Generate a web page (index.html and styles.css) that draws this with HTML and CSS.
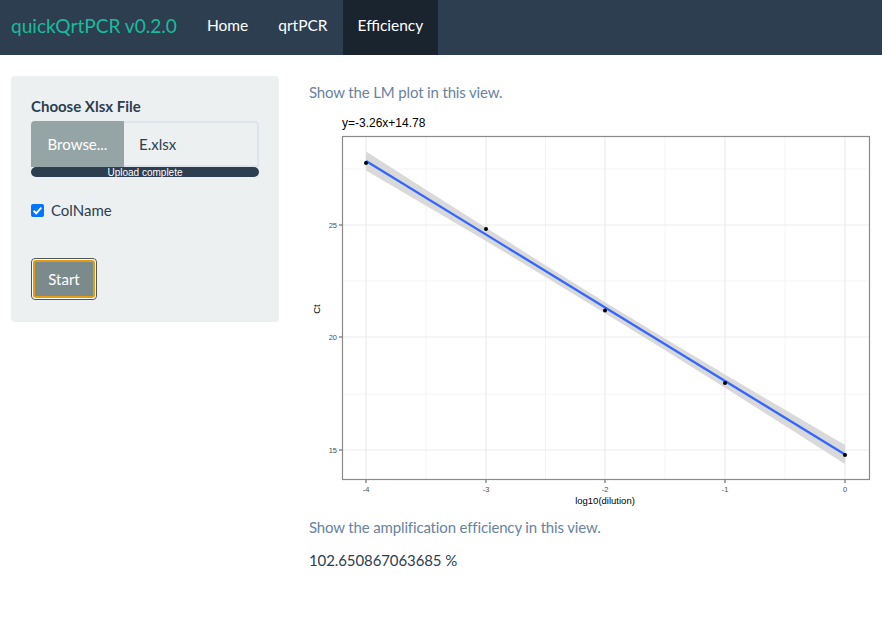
FILE: index.html
```html
<!DOCTYPE html>
<html>
<head>
<meta charset="utf-8">
<title>quickQrtPCR</title>
<link rel="stylesheet" href="styles.css">
</head>
<body>
<nav class="navbar">
  <span class="brand">quickQrtPCR v0.2.0</span>
  <ul class="nav">
    <li class="nav-link">Home</li>
    <li class="nav-link">qrtPCR</li>
    <li class="nav-link active">Efficiency</li>
  </ul>
</nav>
<div class="page">
  <aside class="sidebar">
    <div class="well">
      <div class="label">Choose Xlsx File</div>
      <div class="input-group">
        <span class="browse">Browse...</span>
        <span class="filename">E.xlsx</span>
      </div>
      <div class="progress">Upload complete</div>
      <label class="check"><span class="box"><svg viewBox="0 0 13 13" width="13" height="13"><path d="M2.6 6.8 L5.2 9.3 L10.4 3.6" fill="none" stroke="#fff" stroke-width="2"/></svg></span>ColName</label>
      <div class="btn-wrap"><span class="btn">Start</span></div>
    </div>
  </aside>
  <main class="main">
    <p class="help">Show the LM plot in this view.</p>
    <svg class="plot" width="573" height="404" viewBox="309 108 573 404" font-family="'Liberation Sans', Arial, sans-serif">
      <text x="342" y="127" font-size="12" fill="#000">y=-3.26x+14.78</text>
      <rect x="342.5" y="136.5" width="527" height="343" fill="#fff"/>
      <g stroke="#f4f4f4" stroke-width="1">
        <line x1="426" y1="137" x2="426" y2="480"/>
        <line x1="545.5" y1="137" x2="545.5" y2="480"/>
        <line x1="665" y1="137" x2="665" y2="480"/>
        <line x1="785" y1="137" x2="785" y2="480"/>
        <line x1="343" y1="169" x2="869" y2="169"/>
        <line x1="343" y1="281" x2="869" y2="281"/>
        <line x1="343" y1="394" x2="869" y2="394"/>
      </g>
      <g stroke="#ebebeb" stroke-width="1.2">
        <line x1="366" y1="137" x2="366" y2="480"/>
        <line x1="486" y1="137" x2="486" y2="480"/>
        <line x1="605" y1="137" x2="605" y2="480"/>
        <line x1="725" y1="137" x2="725" y2="480"/>
        <line x1="845" y1="137" x2="845" y2="480"/>
        <line x1="343" y1="225" x2="869" y2="225"/>
        <line x1="343" y1="337" x2="869" y2="337"/>
        <line x1="343" y1="450" x2="869" y2="450"/>
      </g>
      <polygon fill="#d9d9d9" points="366,151.55 426,189.74 486,227.68 545.5,265.26 605,302.27 665,338.61 725,374.38 785,409.79 845,444.95 845,463.95 785,425.77 725,387.82 665,350.25 605,313.23 545.5,276.9 486,241.12 426,205.72 366,170.55"/>
      <line x1="366" y1="161.05" x2="845" y2="454.45" stroke="#3366ff" stroke-width="2.3"/>
      <g fill="#000">
        <circle cx="366" cy="163" r="2"/>
        <circle cx="486" cy="229" r="2"/>
        <circle cx="605" cy="310.5" r="2"/>
        <circle cx="725" cy="383" r="2"/>
        <circle cx="845" cy="455" r="2"/>
      </g>
      <rect x="342.5" y="136.5" width="527" height="343" fill="none" stroke="#8a8a8a" stroke-width="1.2"/>
      <g stroke="#555" stroke-width="1">
        <line x1="339" y1="225" x2="342" y2="225"/>
        <line x1="339" y1="337" x2="342" y2="337"/>
        <line x1="339" y1="450" x2="342" y2="450"/>
        <line x1="366" y1="480" x2="366" y2="483"/>
        <line x1="486" y1="480" x2="486" y2="483"/>
        <line x1="605" y1="480" x2="605" y2="483"/>
        <line x1="725" y1="480" x2="725" y2="483"/>
        <line x1="845" y1="480" x2="845" y2="483"/>
      </g>
      <g font-size="7.5" fill="#4d4d4d" text-anchor="end">
        <text x="337" y="227.7">25</text>
        <text x="337" y="339.7">20</text>
        <text x="337" y="452.7">15</text>
      </g>
      <g font-size="7.5" fill="#4d4d4d" text-anchor="middle">
        <text x="366" y="492">-4</text>
        <text x="486" y="492">-3</text>
        <text x="605" y="492">-2</text>
        <text x="725" y="492">-1</text>
        <text x="845" y="492">0</text>
      </g>
      <text x="605" y="503.5" font-size="9.5" fill="#000" text-anchor="middle">log10(dilution)</text>
      <text x="0" y="0" font-size="9.5" fill="#000" text-anchor="middle" transform="translate(319.5 309) rotate(-90)">Ct</text>
    </svg>
    <p class="help help2">Show the amplification efficiency in this view.</p>
    <p class="value">102.650867063685 %</p>
  </main>
</div>
</body>
</html>
```

FILE: styles.css
```css
* { box-sizing: border-box; }
html, body { margin: 0; padding: 0; }
body {
  font-family: Lato, "Open Sans", sans-serif;
  font-size: 15px;
  line-height: 1.5;
  color: #2c3e50;
  background: #fff;
  width: 882px;
  height: 639px;
  overflow: hidden;
}
.navbar {
  height: 55px;
  background: #2c3e50;
  display: flex;
  align-items: stretch;
  padding-left: 11px;
}
.brand {
  color: #18bc9c;
  font-size: 19.1px;
  display: flex;
  align-items: center;
  margin-right: 15px;
  padding-bottom: 3px;
}
.nav {
  list-style: none;
  margin: 0;
  padding: 0;
  display: flex;
}
.nav-link {
  color: #fff;
  font-size: 15.5px;
  padding: 0 15px;
  display: flex;
  align-items: center;
  padding-bottom: 4px;
}
.nav-link.active { background: #1a242f; padding-left: 15px; padding-right: 15px; }
.page {
  display: flex;
  padding-top: 21px;
}
.sidebar {
  width: 309px;
  padding-left: 11px;
  padding-right: 30px;
}
.well {
  background: #ecf0f1;
  border-radius: 4px;
  padding: 20px 20px 21px 20px;
  height: 246px;
}
.label {
  font-weight: bold;
  font-size: 15px;
  line-height: 22px;
  margin-bottom: 4px;
  margin-top: -1px;
}
.input-group {
  display: flex;
  height: 46px;
}
.browse {
  width: 93px;
  background: #95a5a6;
  color: #fff;
  display: flex;
  align-items: center;
  justify-content: center;
  border-radius: 4px 0 0 0;
  font-size: 15px;
}
.filename {
  flex: 1;
  background: #ecf0f1;
  border: 2px solid #dde4ec;
  border-left: none;
  border-radius: 0 4px 0 0;
  display: flex;
  align-items: center;
  padding-left: 15px;
  font-size: 15px;
}
.progress {
  height: 10px;
  background: #2c3e50;
  border-radius: 5px;
  color: #fff;
  font-family: "Liberation Sans", Arial, sans-serif;
  font-size: 10px;
  line-height: 12px;
  text-align: center;
}
.check {
  display: flex;
  align-items: center;
  margin-top: 22px;
  font-size: 15px;
  line-height: 22px;
}
.box {
  width: 13px;
  height: 13px;
  background: #0075ff;
  border-radius: 2px;
  margin-right: 7px;
  display: inline-flex;
}
.btn-wrap {
  margin-top: 37px;
  width: 66px;
  height: 42px;
  border: 1px solid #555;
  border-radius: 4px;
  padding: 1px;
  background: #fff;
}
.btn {
  display: flex;
  align-items: center;
  justify-content: center;
  width: 100%;
  height: 100%;
  background: #7b8a8b;
  border: 2px solid #e59b12;
  border-radius: 3px;
  color: #fff;
  font-size: 15px;
}
.main {
  flex: 1;
  display: flex;
  flex-direction: column;
  align-items: flex-start;
}
.help {
  margin: 5px 0 0 0;
  color: #6883a0;
  line-height: 22px;
  font-size: 15px;
  letter-spacing: -0.15px;
}
.plot {
  display: block;
  margin-top: 5px;
}
.help2 { margin-top: 4px; }
.value {
  margin: 11px 0 0 0;
  line-height: 22px;
  font-size: 15px;
  letter-spacing: -0.1px;
}
```
